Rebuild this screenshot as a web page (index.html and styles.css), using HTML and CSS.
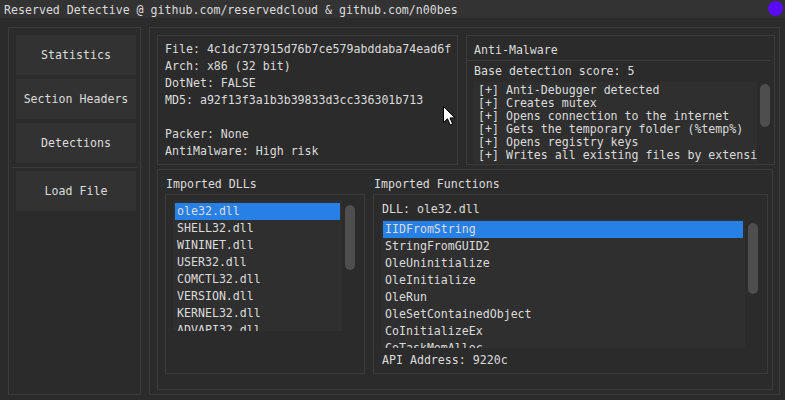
FILE: index.html
```html
<!DOCTYPE html>
<html>
<head>
<meta charset="utf-8">
<link rel="stylesheet" href="styles.css">
</head>
<body>
<div class="titlebar">
  <span class="title">Reserved Detective @ github.com/reservedcloud &amp; github.com/n00bes</span>
  <span class="dot"></span>
</div>
<div class="main">
  <div class="side">
    <div class="btn">Statistics</div>
    <div class="btn">Section Headers</div>
    <div class="btn">Detections</div>
    <div class="sep"></div>
    <div class="btn">Load File</div>
  </div>
  <div class="content">
    <div class="toprow">
      <div class="panel info">
        <div class="row">File: 4c1dc737915d76b7ce579abddaba74ead6f</div>
        <div class="row">Arch: x86 (32 bit)</div>
        <div class="row">DotNet: FALSE</div>
        <div class="row">MD5: a92f13f3a1b3b39833d3cc336301b713</div>
        <div class="row"></div>
        <div class="row">Packer: None</div>
        <div class="row">AntiMalware: High risk</div>
      </div>
      <div class="panel anti">
        <div class="line">Anti-Malware</div>
        <div class="hsep"></div>
        <div class="line score">Base detection score: 5</div>
        <div class="detrow">
          <div class="detlist">
            <div>[+] Anti-Debugger detected</div>
            <div>[+] Creates mutex</div>
            <div>[+] Opens connection to the internet</div>
            <div>[+] Gets the temporary folder (%temp%)</div>
            <div>[+] Opens registry keys</div>
            <div>[+] Writes all existing files by extension</div>
          </div>
          <div class="grab grab-det"></div>
        </div>
      </div>
    </div>
    <div class="panel imports">
      <div class="col">
        <div class="label">Imported DLLs</div>
        <div class="box dllbox">
          <div class="listrow">
            <div class="list dlllist">
              <div class="item sel">ole32.dll</div>
              <div class="item">SHELL32.dll</div>
              <div class="item">WININET.dll</div>
              <div class="item">USER32.dll</div>
              <div class="item">COMCTL32.dll</div>
              <div class="item">VERSION.dll</div>
              <div class="item">KERNEL32.dll</div>
              <div class="item">ADVAPI32.dll</div>
            </div>
            <div class="grab grab-dll"></div>
          </div>
        </div>
      </div>
      <div class="col">
        <div class="label">Imported Functions</div>
        <div class="box fnbox">
          <div class="line dllname">DLL: ole32.dll</div>
          <div class="listrow fnrow">
            <div class="list fnlist">
              <div class="item sel">IIDFromString</div>
              <div class="item">StringFromGUID2</div>
              <div class="item">OleUninitialize</div>
              <div class="item">OleInitialize</div>
              <div class="item">OleRun</div>
              <div class="item">OleSetContainedObject</div>
              <div class="item">CoInitializeEx</div>
              <div class="item">CoTaskMemAlloc</div>
            </div>
            <div class="grab grab-fn"></div>
          </div>
          <div class="line api">API Address: 9220c</div>
        </div>
      </div>
    </div>
  </div>
</div>
<svg class="cursor" width="13" height="20" viewBox="0 0 13 20">
  <path d="M0.5 0.5 L0.5 16.5 L4.5 12.8 L7.2 19 L9.6 18 L7 11.9 L12 11.9 Z" fill="#ffffff" stroke="#000000" stroke-width="1"/>
</svg>
</body>
</html>
```
FILE: styles.css
```css
* { box-sizing: border-box; }
html, body { margin: 0; padding: 0; }
body {
  width: 785px;
  height: 400px;
  overflow: hidden;
  position: relative;
  background: #2b2b2b;
  color: #dcdcdc;
  font-family: "DejaVu Sans Mono", "Liberation Mono", monospace;
  font-size: 11.6px;
  line-height: 13px;
  white-space: nowrap;
}
.titlebar {
  height: 18px;
  background: #333333;
  display: flex;
  align-items: center;
  justify-content: space-between;
  padding: 2px 2px 0 4px;
}
.dot {
  width: 15px;
  height: 15px;
  border-radius: 50%;
  background: #5a0aff;
  margin-top: -3px;
}
.main {
  height: 382px;
  display: flex;
  gap: 8px;
  padding: 9px 5px 5px 8px;
}
.side {
  width: 133px;
  border: 1px solid #3b3b3b;
  padding: 7px 4px 0 7px;
  display: flex;
  flex-direction: column;
  gap: 4px;
}
.btn {
  height: 40px;
  background: #323232;
  display: flex;
  align-items: center;
  justify-content: center;
}
.sep {
  height: 1px;
  background: #3b3b3b;
  margin: 0 -1px -1px -4px;
}
.content {
  flex: 1;
  border: 1px solid #3b3b3b;
  padding: 7px 4px 4px 7px;
  display: flex;
  flex-direction: column;
  gap: 4px;
}
.panel { border: 1px solid #3b3b3b; }
.toprow {
  height: 130px;
  display: flex;
  gap: 8px;
}
.info {
  width: 301px;
  padding: 5px 0 0 7px;
}
.row { height: 17px; line-height: 17px; }
.anti {
  flex: 1;
  padding: 8px 0 0 7px;
  overflow: hidden;
}
.hsep {
  height: 1px;
  background: #3b3b3b;
  margin: 3px 3px 0 -7px;
}
.score { margin-top: 4px; }
.detrow {
  display: flex;
  margin: 4px 0 0 -1px;
}
.detlist {
  width: 284px;
  height: 81px;
  background: #2f2f2f;
  padding: 2px 0 0 5px;
  overflow: hidden;
}
.grab {
  width: 10px;
  border-radius: 5px;
  background: #4e4e4e;
  margin-left: 3px;
  flex: none;
}
.grab-det { height: 43px; margin-top: 2px; }
.imports {
  flex: 1;
  margin-right: 2px;
  padding: 8px 4px 15px 7px;
  display: grid;
  grid-template-columns: 200px 395px;
  gap: 8px;
}
.col {
  display: flex;
  flex-direction: column;
  gap: 3px;
}
.label { padding-left: 1px; }
.box {
  height: 180px;
  border: 1px solid #3b3b3b;
}
.dllbox { padding: 5px 0 0 7px; }
.listrow {
  display: flex;
  align-items: flex-start;
}
.list {
  background: #2f2f2f;
  overflow: hidden;
  padding: 3px 0 0 2px;
}
.dlllist { width: 169px; height: 131px; }
.item {
  height: 17px;
  line-height: 17px;
  padding-left: 2px;
}
.dlllist .item { width: 165px; }
.sel { background: #2780e6; }
.grab-dll { height: 65px; margin-top: 5px; }
.fnbox { padding: 8px 0 0 7px; }
.dllname { padding-left: 1px; }
.fnrow { margin-top: 3px; }
.fnlist { width: 364px; height: 129px; padding-top: 2px; }
.fnlist .item { width: 360px; }
.grab-fn { height: 71px; margin-top: 4px; }
.api { margin-top: 6px; padding-left: 1px; }
.cursor {
  position: absolute;
  left: 443px;
  top: 106px;
}
```
